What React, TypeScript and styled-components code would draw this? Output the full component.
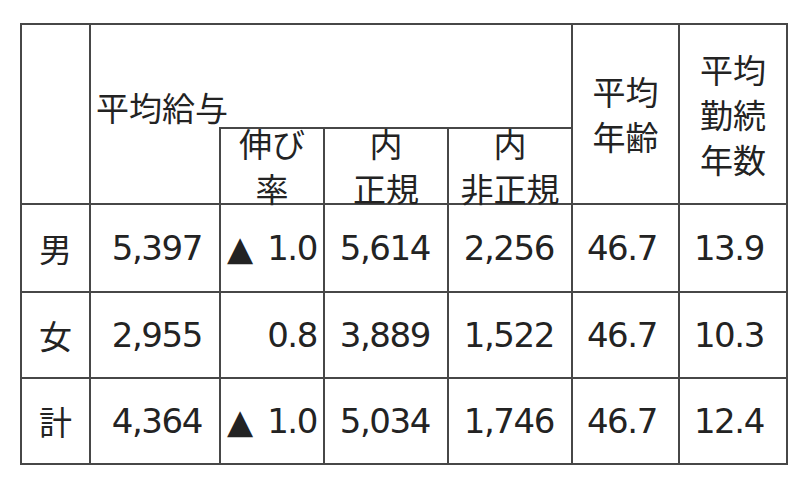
import { Fragment } from 'react';
import styled, { createGlobalStyle } from 'styled-components';

const line = '2px solid #474747';

const GlobalStyle = createGlobalStyle`
  body {
    margin: 0;
    background: #ffffff;
  }
`;

const Page = styled.div`
  padding: 23px 0 0 20px;
`;

const Table = styled.div`
  display: grid;
  grid-template-columns: 69px 130px 104px 124px 124px 107px 108px;
  grid-template-rows: 102px 78px 88px 86px 86px;
  width: max-content;
  border-top: ${line};
  border-left: ${line};
  color: #232323;
  font-family: 'DejaVu Sans', 'Noto Sans CJK JP', sans-serif;
`;

const Cell = styled.div<{ $col: string; $row: string; $top?: boolean; $noBottom?: boolean }>`
  grid-column: ${({ $col }) => $col};
  grid-row: ${({ $row }) => $row};
  border-right: ${line};
  border-bottom: ${({ $noBottom }) => ($noBottom ? 'none' : line)};
  border-top: ${({ $top }) => ($top ? line : 'none')};
  display: flex;
  min-width: 0;
`;

const HeadText = styled.div`
  font-family: 'Noto Sans CJK JP', sans-serif;
  font-size: 33px;
  line-height: 45px;
  text-align: center;
  white-space: nowrap;
`;

const GroupHead = styled(Cell)`
  align-items: flex-end;
  padding: 0 0 3px 5px;
  ${HeadText} {
    line-height: 1;
    text-align: left;
  }
`;

const CenterHead = styled(Cell)`
  align-items: center;
  justify-content: center;
`;

const RowLabel = styled(Cell)`
  align-items: center;
  justify-content: center;
  font-family: 'Noto Sans CJK JP', sans-serif;
  font-size: 33px;
`;

const NumCell = styled(Cell)<{ $pad: number }>`
  align-items: center;
  justify-content: flex-end;
  padding-right: ${({ $pad }) => $pad}px;
  font-size: 34px;
  letter-spacing: -1.4px;
  white-space: nowrap;
`;

const Value = styled.span`
  display: flex;
  align-items: center;
`;

const Triangle = styled.span`
  margin-right: 14px;
  letter-spacing: 0;
`;

type Row = { label: string; values: string[] };

const rows: Row[] = [
  { label: '男', values: ['5,397', '▲1.0', '5,614', '2,256', '46.7', '13.9'] },
  { label: '女', values: ['2,955', '0.8', '3,889', '1,522', '46.7', '10.3'] },
  { label: '計', values: ['4,364', '▲1.0', '5,034', '1,746', '46.7', '12.4'] },
];

const pads = [17, 6, 17, 17, 21, 22];

const renderValue = (value: string) => {
  if (!value.startsWith('▲')) return value;

  return (
    <Value>
      <Triangle>▲</Triangle>
      <span>{value.slice(1)}</span>
    </Value>
  );
};

const App = () => {
  return (
    <Page>
      <GlobalStyle />
      <Table>
        <Cell $col="1" $row="1 / 3" />
        <GroupHead $col="2 / 6" $row="1" $noBottom>
          <HeadText>平均給与</HeadText>
        </GroupHead>
        <Cell $col="2" $row="2" />
        <CenterHead $col="3" $row="2" $top>
          <HeadText>
            伸び
            <br />率
          </HeadText>
        </CenterHead>
        <CenterHead $col="4" $row="2" $top>
          <HeadText>
            内
            <br />
            正規
          </HeadText>
        </CenterHead>
        <CenterHead $col="5" $row="2" $top>
          <HeadText>
            内
            <br />
            非正規
          </HeadText>
        </CenterHead>
        <CenterHead $col="6" $row="1 / 3">
          <HeadText>
            平均
            <br />
            年齢
          </HeadText>
        </CenterHead>
        <CenterHead $col="7" $row="1 / 3">
          <HeadText>
            平均
            <br />
            勤続
            <br />
            年数
          </HeadText>
        </CenterHead>

        {rows.map((row, r) => (
          <Fragment key={`row-${r}`}>
            <RowLabel $col="1" $row={`${r + 3}`}>
              {row.label}
            </RowLabel>
            {row.values.map((value, c) => (
              <NumCell key={`v-${r}-${c}`} $col={`${c + 2}`} $row={`${r + 3}`} $pad={pads[c]}>
                {renderValue(value)}
              </NumCell>
            ))}
          </Fragment>
        ))}
      </Table>
    </Page>
  );
};

export default App;
